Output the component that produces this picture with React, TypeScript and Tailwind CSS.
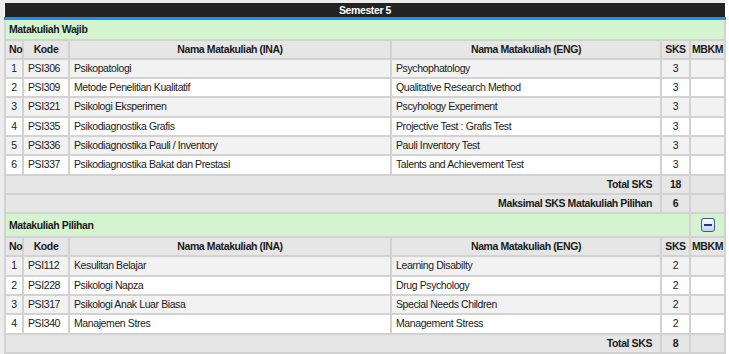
import React from 'react';

type Mk = { kode: string; ina: string; eng: string; sks: number };

const wajib: Mk[] = [
  { kode: 'PSI306', ina: 'Psikopatologi', eng: 'Psychophatology', sks: 3 },
  { kode: 'PSI309', ina: 'Metode Penelitian Kualitatif', eng: 'Qualitative Research Method', sks: 3 },
  { kode: 'PSI321', ina: 'Psikologi Eksperimen', eng: 'Pscyhology Experiment', sks: 3 },
  { kode: 'PSI335', ina: 'Psikodiagnostika Grafis', eng: 'Projective Test : Grafis Test', sks: 3 },
  { kode: 'PSI336', ina: 'Psikodiagnostika Pauli / Inventory', eng: 'Pauli Inventory Test', sks: 3 },
  { kode: 'PSI337', ina: 'Psikodiagnostika Bakat dan Prestasi', eng: 'Talents and Achievement Test', sks: 3 },
];

const pilihan: Mk[] = [
  { kode: 'PSI112', ina: 'Kesulitan Belajar', eng: 'Learning Disabilty', sks: 2 },
  { kode: 'PSI228', ina: 'Psikologi Napza', eng: 'Drug Psychology', sks: 2 },
  { kode: 'PSI317', ina: 'Psikologi Anak Luar Biasa', eng: 'Special Needs Children', sks: 2 },
  { kode: 'PSI340', ina: 'Manajemen Stres', eng: 'Management Stress', sks: 2 },
];

const td = 'border-2 border-[#d2d2d2] py-[1px] leading-[15.3px]';

const HeaderRow = () => (
  <tr className="bg-[#e6e6e6] font-bold">
    <td className={`${td} px-[3px]`}>No</td>
    <td className={`${td} text-center`}>Kode</td>
    <td className={`${td} text-center`}>Nama Matakuliah (INA)</td>
    <td className={`${td} text-center`}>Nama Matakuliah (ENG)</td>
    <td className={`${td} text-center`}>SKS</td>
    <td className={`${td} text-center`}>MBKM</td>
  </tr>
);

const Rows = ({ items }: { items: Mk[] }) => (
  <>
    {items.map((m, i) => (
      <tr key={m.kode} className={i % 2 === 0 ? 'bg-[#f2f2f2]' : 'bg-white'}>
        <td className={`${td} text-center`}>{i + 1}</td>
        <td className={`${td} px-[4px]`}>{m.kode}</td>
        <td className={`${td} px-[4px]`}>{m.ina}</td>
        <td className={`${td} px-[4px]`}>{m.eng}</td>
        <td className={`${td} text-center`}>{m.sks}</td>
        <td className={td}></td>
      </tr>
    ))}
  </>
);

const TotalRow = ({ label, value }: { label: string; value: number }) => (
  <tr className="bg-[#e6e6e6] font-bold">
    <td colSpan={4} className={`${td} text-right pr-[8px]`}>{label}</td>
    <td className={`${td} text-center`}>{value}</td>
    <td className={td}></td>
  </tr>
);

const MinusButton = () => (
  <button className="w-[14px] h-[14px] rounded-[3px] border border-[#3d55a8] bg-gradient-to-b from-white to-[#c9d3f0] flex items-center justify-center mx-auto">
    <span className="block w-[8px] h-[2px] bg-[#24378a]" />
  </button>
);

export default function App() {
  return (
    <div className="w-[729px] h-[354px] bg-white overflow-hidden">
      <div className="border-l-[4px] border-t-[3px] border-[#ececec] w-[725px]">
        <table className="w-[720px] table-fixed border-collapse text-[10.5px] tracking-[-0.4px] text-[#1a1a1a] font-['Liberation_Sans',Arial,sans-serif]">
          <colgroup>
            <col className="w-[18px]" />
            <col className="w-[46px]" />
            <col className="w-[322px]" />
            <col className="w-[270px]" />
            <col className="w-[29px]" />
            <col className="w-[35px]" />
          </colgroup>
          <tbody>
            <tr>
              <td colSpan={6} className="bg-[#222] border-b-[3px] border-[#1e8ff0] text-white font-bold text-center leading-[14px]">
                Semester 5
              </td>
            </tr>
            <tr className="bg-[#d4f4d0] font-bold">
              <td colSpan={6} className={`${td} px-[3px] h-[21px]`}>Matakuliah Wajib</td>
            </tr>
            <HeaderRow />
            <Rows items={wajib} />
            <TotalRow label="Total SKS" value={18} />
            <TotalRow label="Maksimal SKS Matakuliah Pilihan" value={6} />
            <tr className="bg-[#d4f4d0] font-bold">
              <td colSpan={5} className={`${td} px-[3px] h-[24px]`}>Matakuliah Pilihan</td>
              <td className={td}>
                <MinusButton />
              </td>
            </tr>
            <HeaderRow />
            <Rows items={pilihan} />
            <TotalRow label="Total SKS" value={8} />
          </tbody>
        </table>
      </div>
    </div>
  );
}
